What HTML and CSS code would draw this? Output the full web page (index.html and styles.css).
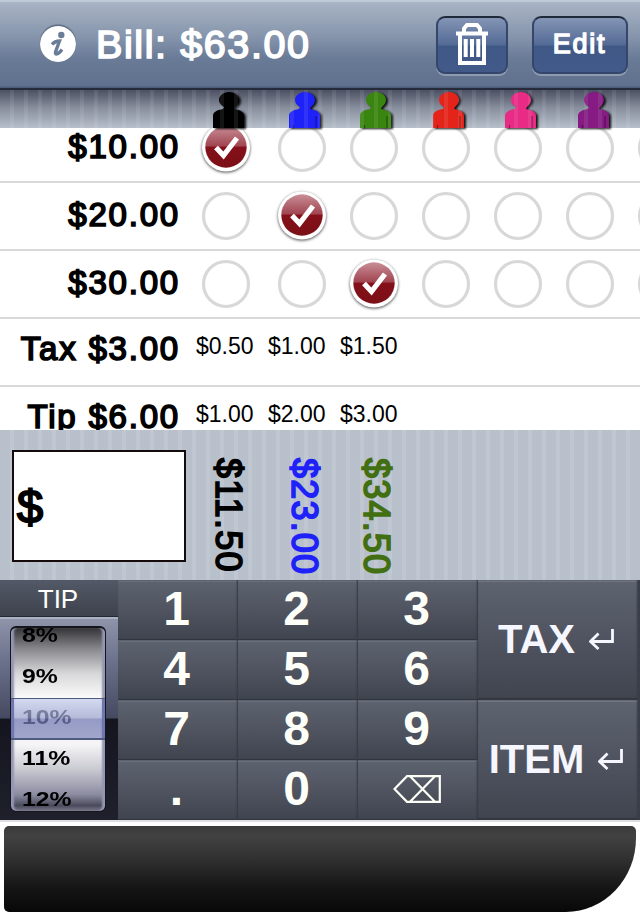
FILE: index.html
```
<!DOCTYPE html>
<html lang="en">
<head>
<meta charset="utf-8">
<title>Bill</title>
<link rel="stylesheet" href="styles.css">
</head>
<body>
<svg class="defs" width="0" height="0">
  <defs>
    <linearGradient id="gloss" x1="0" y1="0" x2="0" y2="1">
      <stop offset="0" stop-color="#c98e96"/><stop offset=".48" stop-color="#a04450"/>
      <stop offset=".5" stop-color="#84101a"/><stop offset="1" stop-color="#7c0f16"/>
    </linearGradient>
    <symbol id="on" viewBox="0 0 56 56">
      <circle class="halo" cx="28" cy="27.500" r="24"/>
      <circle cx="28" cy="27" r="20.700" fill="url(#gloss)"/>
      <path d="M18 27.500l7.500 8L39 18" fill="none" stroke="#fff" stroke-width="5.200"/>
    </symbol>
    <symbol id="off" viewBox="0 0 56 56"><circle cx="28" cy="28" r="22.500" fill="#fff" stroke="#d8d8d8" stroke-width="3.200"/></symbol>
    <symbol id="person" viewBox="0 0 40 36">
      <path d="M20 0c6 0 10 4 10 8 0 3-2 5-4 7l-1 2c6 1 10 3 10 7v12H4V24c0-4 4-6 10-7l1-2c-3-2-5-4-5-7 0-4 4-8 10-8z"/>
      <path d="M31 24v12M8.500 33v3" stroke="#000" stroke-opacity=".4" stroke-width="1.200"/>
    </symbol>
    <symbol id="enter" viewBox="0 0 26 22"><path d="M23.500 1v12.500H2M9.500 5.500l-8 8 8 7.500" fill="none" stroke="#f6f6ff" stroke-width="2.800"/></symbol>
  </defs>
</svg>
<main class="app">
  <header class="bar">
    <svg class="info" viewBox="0 0 36 36"><circle cx="18" cy="18" r="18" fill="#fff"/><circle cx="21.300" cy="9" r="3.200" fill="#6b7c98"/><path d="M12 18.500c2.500-3 5-3.500 7.500-3.500L15.500 26c-.8 3 2.500 3 6.500-2.500" fill="none" stroke="#6b7c98" stroke-width="3.400"/></svg>
    <h1 class="title rounded">Bill: $63.00</h1>
    <button class="btn trash"><svg viewBox="0 0 32 42"><path d="M0 8.500v4h32v-4z" fill="#fff"/><path d="M8 9V5.500L11 2h10l3 3.500V9M4 11v29h24V11" fill="none" stroke="#fff" stroke-width="4"/><path d="M9.700 16v18M16 16v18M22.300 16v18" stroke="#fff" stroke-width="4"/></svg></button>
    <button class="btn edit rounded">Edit</button>
  </header>
  <div class="people">
    <svg class="black"><use href="#person"/></svg><svg class="blue"><use href="#person"/></svg><svg class="green"><use href="#person"/></svg><svg class="red"><use href="#person"/></svg><svg class="pink"><use href="#person"/></svg><svg class="purple"><use href="#person"/></svg>
  </div>
  <section class="list">
    <div class="row first"><span class="label rounded">$10.00</span><div class="marks"><svg><use href="#on"/></svg><svg><use href="#off"/></svg><svg><use href="#off"/></svg><svg><use href="#off"/></svg><svg><use href="#off"/></svg><svg><use href="#off"/></svg><svg><use href="#off"/></svg></div></div>
    <div class="row"><span class="label rounded">$20.00</span><div class="marks"><svg><use href="#off"/></svg><svg><use href="#on"/></svg><svg><use href="#off"/></svg><svg><use href="#off"/></svg><svg><use href="#off"/></svg><svg><use href="#off"/></svg><svg><use href="#off"/></svg></div></div>
    <div class="row"><span class="label rounded">$30.00</span><div class="marks"><svg><use href="#off"/></svg><svg><use href="#off"/></svg><svg><use href="#on"/></svg><svg><use href="#off"/></svg><svg><use href="#off"/></svg><svg><use href="#off"/></svg><svg><use href="#off"/></svg></div></div>
    <div class="row sum"><span class="label rounded">Tax $3.00</span><div class="shares"><span>$0.50</span><span>$1.00</span><span>$1.50</span></div></div>
    <div class="row sum"><span class="label rounded">Tip $6.00</span><div class="shares"><span>$1.00</span><span>$2.00</span><span>$3.00</span></div></div>
  </section>
  <section class="totals">
    <div class="entry rounded">$</div>
    <div class="owed rounded black">$11.50</div>
    <div class="owed rounded blue">$23.00</div>
    <div class="owed rounded green">$34.50</div>
  </section>
  <section class="pad">
    <div class="tip">
      <div class="tip-head">TIP</div>
      <div class="well">
        <div class="wheel">
          <span>8%</span><span>9%</span><span class="picked">10%</span><span>11%</span><span>12%</span>
          <div class="band"></div>
        </div>
      </div>
    </div>
    <div class="keys">
      <button class="key">1</button><button class="key">2</button><button class="key">3</button>
      <button class="key">4</button><button class="key">5</button><button class="key">6</button>
      <button class="key">7</button><button class="key">8</button><button class="key">9</button>
      <button class="key">.</button><button class="key">0</button>
      <button class="key"><svg class="erase" viewBox="0 0 48 28"><path d="M14 1.200h32.800v25.600H14L1.500 14zM17 1.200l25 25.600M42 1.200L17 26.800" fill="none" stroke="#fdfff6" stroke-width="2.200"/></svg></button>
    </div>
    <div class="actions">
      <button class="key">TAX<svg><use href="#enter"/></svg></button>
      <button class="key">ITEM<svg><use href="#enter"/></svg></button>
    </div>
  </section>
  <footer class="panel"></footer>
</main>
</body>
</html>
```
FILE: styles.css
```
* { box-sizing: border-box; }
body { margin: 0; background: #fff; font-family: "Liberation Sans", Arial, sans-serif; color: #000; }
.defs { position: absolute; }
button { border: 0; margin: 0; padding: 0; font: inherit; color: inherit; }
.app { width: 640px; height: 920px; overflow: hidden; }
.rounded { -webkit-text-stroke: 1.700px currentColor; white-space: nowrap; }

.bar {
  height: 90px; display: flex; align-items: center; padding: 0 12px 2px 40px;
  border-top: 2px solid #bfcad8; border-bottom: 2px solid #252b3a;
  background: linear-gradient(#a9b5c5, #8493ab 42%, #6a7b97 65%, #60718f 97%, #465776);
  color: #fff;
}
.info { width: 36px; height: 36px; border-radius: 50%; box-shadow: 0 -1.5px 1px #5b6a80; }
.title { margin: 0 0 0 20px; width: 340px; font-size: 39.500px; font-weight: 400; letter-spacing: 1.600px; line-height: 44px; }
.btn {
  height: 58px; display: flex; align-items: center; justify-content: center; border-radius: 9px; margin-top: 2px;
  border: 2px solid #34476b; border-top-color: #20293b;
  background: linear-gradient(#8495b5, #536a95 50%, #405886 52%, #425a89);
  box-shadow: 0 2px 0 #8e9cb1;
}
.trash { width: 72px; }
.trash svg { width: 32px; height: 42px; margin-bottom: 2px; }
.edit { width: 96px; margin-left: 24px; padding: 0 1px 1px 0; font-size: 27px; letter-spacing: 1.800px; -webkit-text-stroke-width: 1.400px; }

.people {
  height: 38px; display: flex; padding: 2px 0 0 209px; position: relative;
  background: linear-gradient(#4c5062, #858c9b 45%, #b6bfca);
}
.people::after {
  content: ""; position: absolute; inset: 0;
  background: repeating-linear-gradient(90deg, transparent 0 10px, rgba(255,255,255,.08) 10px 14px);
}
.people svg { width: 40px; height: 36px; margin-right: 32.500px; fill: currentColor; filter: drop-shadow(2px 1px 1px rgba(0,0,0,.9)); flex: none; }
.people .black { margin-right: 36px; }
.people .blue { margin-right: 31px; }
.black { color: #000; }
.blue { color: #1e22f8; }
.green { color: #39850f; }
.red { color: #e4241b; }
.pink { color: #e82b84; }
.purple { color: #851b83; }

.list { height: 302px; overflow: hidden; }
.row { height: 68px; display: flex; border-bottom: 2px solid #d9d9d9; overflow: hidden; }
.first { margin-top: -13px; }
.label { width: 180px; flex: none; text-align: right; font-size: 33px; line-height: 63px; letter-spacing: 1.800px; }
.marks { display: flex; padding: 5px 0 0 18px; flex: none; }
.marks svg { width: 56px; height: 56px; margin-right: 16px; }
.marks svg:first-child { margin-right: 20px; }
.halo { fill: #fff; filter: drop-shadow(0 1.500px 1.500px rgba(0,0,0,.7)); }
.sum .label { line-height: 59px; letter-spacing: 1.800px; }
.shares { display: flex; gap: 14.500px; padding-left: 16px; font-size: 23px; line-height: 55px; }
.shares span { width: 57.500px; }

.totals {
  height: 150px; display: flex; padding: 20px 0 0 12px;
  background: repeating-linear-gradient(90deg, #b8c0cb 0 10px, #c0c7d1 10px 14px);
}
.entry { width: 174px; height: 112px; border: 2px solid #160b0c; background: #fff; font-size: 47px; line-height: 109px; padding-left: 3px; -webkit-text-stroke-width: 2px; margin-right: 20px; }
.owed { writing-mode: vertical-rl; width: 44px; line-height: 44px; font-size: 36px; letter-spacing: 1.200px; padding-top: 8px; margin-right: 28px; }
.owed.black { margin-right: 32px; }
.owed.green { color: #426f12; }

.pad { height: 242px; display: flex; border-bottom: 2px solid #dfdfe3; }
.tip { width: 118px; }
.tip-head { height: 37px; border-bottom: 1px solid #262932; padding-right: 2px; text-align: center; color: #fff; font-size: 26px; line-height: 39px; background: linear-gradient(#535966, #3d424d); }
.well {
  height: 203px; padding: 8px 12px 9px 10px; border-top: 2px solid #a9b1c2;
  background: linear-gradient(#8f94aa, #6a708a 22%, #454a60 49%, #14151f 50%, #1e202b);
}
.wheel {
  position: relative; height: 186px; overflow: hidden; border-radius: 6px; border: 2px solid #15151c; border-width: 2px 1px 1px;
  display: flex; flex-direction: column; padding-left: 11px; margin-top: -1px;
  background: linear-gradient(#343437, #8c8c90 12%, #d8d8da 25%, #fafafa 38%, #fff 48%, #f4f4f6 64%, #cacad2 77%, #8c8ca1 91%, #4a4a5c 97%, #77778b);
  box-shadow: inset 4px 0 2px -1px #9497b4, inset -4px 0 2px -1px #9497b4;
}
.wheel span { flex: none; height: 41px; font-size: 19.500px; font-weight: 700; line-height: 41px; transform: scaleX(1.270); transform-origin: 0 50%; }
.wheel span:first-child { height: 28px; line-height: 15px; }
.wheel .picked { color: #343846; }
.band {
  position: absolute; left: 0; right: 0; top: 70px; height: 42px;
  border: 2px solid #4e5a80; border-width: 1px 0 2px;
  background: linear-gradient(rgba(190,200,232,.65), rgba(140,149,196,.65) 49%, rgba(100,108,170,.68) 51%, rgba(114,122,180,.65));
  box-shadow: inset 3px 0 #7077b0, inset -3px 0 #7077b0;
}
.keys { width: 360px; display: grid; grid-template-columns: repeat(3, 120px); grid-template-rows: repeat(4, 60px); }
.key {
  display: flex; align-items: center; justify-content: center; padding: 0 3px 3px 0;
  color: #fdfff8; font-size: 48px; font-weight: 700; line-height: 57px;
  background: linear-gradient(#5e6370, #3f444f);
  box-shadow: inset -1px 0 2px #343841, inset 0 2px #6d727e, inset 0 -1px #33363e;
}
.erase { width: 48px; height: 28px; margin-top: 1px; }
.actions { width: 162px; display: grid; grid-template-rows: 120px 120px; }
.actions .key { font-size: 40px; color: #f6f6ff; padding: 0 5px 2px 0; gap: 14px; box-shadow: inset -3px 0 2px #3a3e48, inset 0 2px #737884, inset 0 -2px 1px #33363e; }
.actions svg { width: 26px; height: 22px; }
.panel {
  height: 86px; margin: 4px; border-radius: 5px 5px 70px 5px / 5px 5px 74px 5px;
  background: linear-gradient(#3a3a3a, #424242 12%, #333 35%, #161616 70%, #080808);
}
```
